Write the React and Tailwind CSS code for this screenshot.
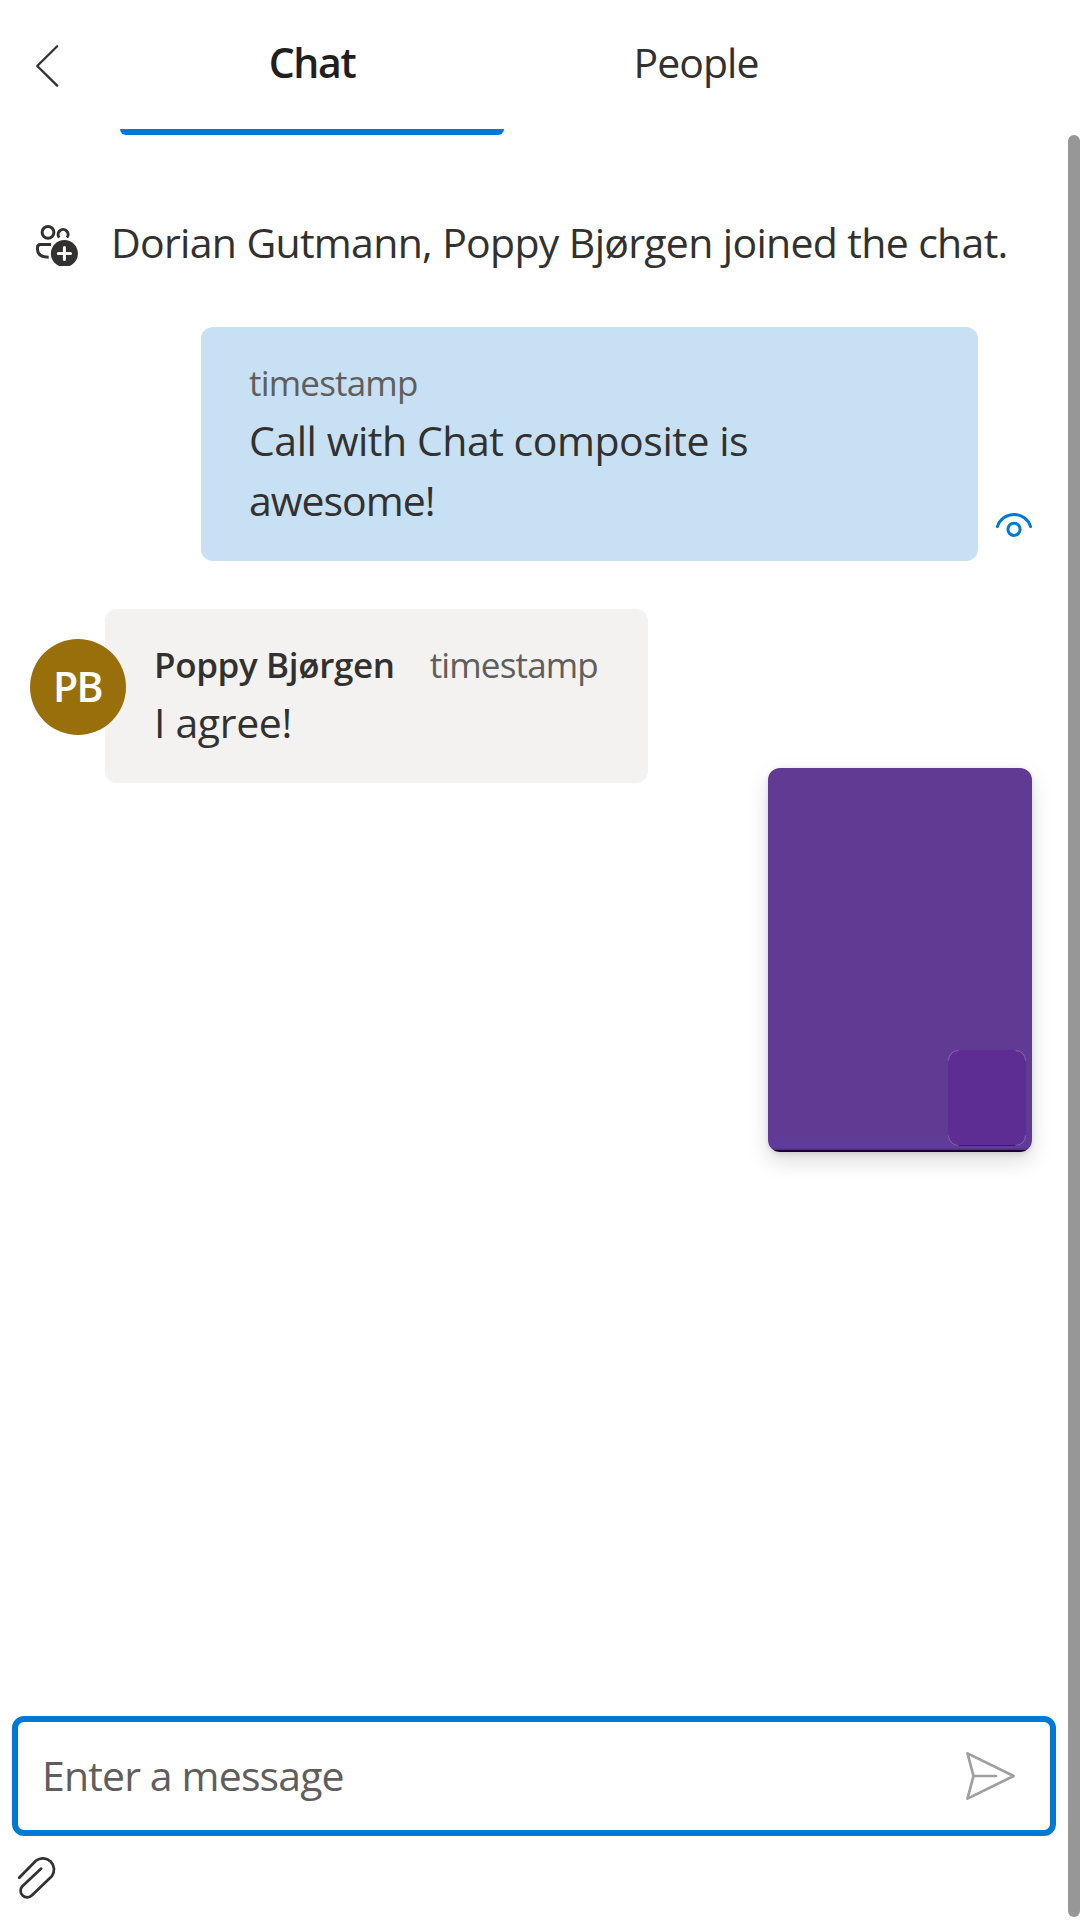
function BackIcon() {
  return (
    <svg className="ml-[33px] mt-[42px] h-[48px] w-[30px] shrink-0" viewBox="0 0 30 48" fill="none" stroke="#323130" strokeWidth="2.3" strokeLinecap="round" strokeLinejoin="round">
      <path d="M24.2 4.2 4.2 24 24.2 43.6" />
    </svg>
  );
}

function PeopleAddIcon() {
  return (
    <svg className="ml-[33px] h-[48px] w-[48px] shrink-0" viewBox="33 218 48 48" fill="none" stroke="#323130" strokeWidth="3">
      <circle cx="48" cy="232.3" r="5.9" />
      <path d="M59.2 237.6a5 5 0 1 1 7.8 0" />
      <path d="M51 244.5H40.5q-3 0-3 3v2q0 7.6 11.2 7.7" />
      <circle cx="64.4" cy="253.5" r="13.5" fill="#323130" stroke="none" />
      <path d="M64.4 247.4v12.2M58.3 253.5h12.2" stroke="#fff" strokeLinecap="round" />
    </svg>
  );
}

function SeenIcon() {
  return (
    <svg className="ml-[15px] mb-[21px] h-[30px] w-[42px] shrink-0" viewBox="993 510 42 30" fill="none" stroke="#0078d4" strokeWidth="3" strokeLinecap="round">
      <path d="M997.4 526.6a17.4 17.4 0 0 1 33.2 0" />
      <circle cx="1014" cy="529.3" r="6.1" />
    </svg>
  );
}

function SendIcon() {
  return (
    <svg className="mr-[33px] h-[54px] w-[54px] shrink-0" viewBox="963 1749 54 54" fill="none" stroke="#a19f9d" strokeWidth="2.7" strokeLinecap="round" strokeLinejoin="round">
      <path d="M967.5 1753.4 1013.6 1776l-46.1 22.6 6-22.6zM973.5 1776H996" />
    </svg>
  );
}

function AttachIcon() {
  return (
    <svg className="ml-[15px] mt-[17px] h-[48px] w-[44px]" viewBox="15 1854 44 48" fill="none" stroke="#323130" strokeWidth="2.7" strokeLinecap="round" strokeLinejoin="round">
      <path d="M19.2 1878.8 35.9 1861.7a11.2 11.2 0 0 1 15.9 15.5L32 1896.3a6.6 6.6 0 0 1-9.6-9.1L41.2 1869.6" />
    </svg>
  );
}

export default function App() {
  return (
    <div className="relative flex h-[1920px] w-[1080px] flex-col overflow-hidden bg-white font-['Open_Sans','Segoe_UI',sans-serif] text-[41px] leading-[60px] text-[#323130]">
      <header className="flex h-[135px] shrink-0">
        <div className="w-[120px] shrink-0">
          <BackIcon />
        </div>
        <div className="flex w-[384px] flex-col items-center justify-between pt-8">
          <span className="font-semibold tracking-[-1.4px] text-[#201f1e]">Chat</span>
          <span className="h-[6px] w-full rounded-b-[6px] bg-[#0078d4]" />
        </div>
        <div className="flex w-[384px] justify-center pt-8">
          <span className="tracking-[-1px]">People</span>
        </div>
      </header>

      <div className="flex min-h-0 flex-1">
        <main className="flex w-[1068px] flex-col">
          <div className="mt-[77px] flex h-[60px] items-center whitespace-nowrap">
            <PeopleAddIcon />
            <span className="ml-[30px] tracking-[-0.7px] [word-spacing:0.2px]">Dorian Gutmann, Poppy Bjørgen joined the chat.</span>
          </div>

          <div className="mt-[55px] flex items-end pl-[201px]">
            <div className="h-[234px] w-[777px] rounded-[12px] bg-[#c7e0f4] pl-[48px] pt-8">
              <p className="mb-[3px] text-[35px] leading-[48px] tracking-[-0.8px] text-[#605e5c]">timestamp</p>
              <p className="w-[540px]">
                <span className="tracking-[-0.46px]">Call with Chat composite is</span>{" "}
                <span className="tracking-[-1px]">awesome!</span>
              </p>
            </div>
            <SeenIcon />
          </div>

          <div className="mt-12 flex pl-[30px]">
            <div className="z-10 -mr-[21px] mt-[30px] flex size-[96px] items-center justify-center rounded-full bg-[#986f0b] pb-[2px] pr-px font-semibold tracking-[-1.5px] text-white">
              PB
            </div>
            <div className="h-[174px] w-[543px] rounded-[12px] bg-[#f3f2f1] pl-[49px] pt-8">
              <p className="mb-[3px] flex gap-[35px] text-[35px] leading-[48px]">
                <span className="font-semibold tracking-[-0.36px]">Poppy Bjørgen</span>
                <span className="tracking-[-0.85px] text-[#605e5c]">timestamp</span>
              </p>
              <p className="tracking-[-0.35px]">I agree!</p>
            </div>
          </div>

          <footer className="mt-auto h-[204px]">
            <div className="ml-3 flex h-[120px] w-[1044px] items-center justify-between rounded-[12px] border-[6px] border-[#0078d4] pl-[24px]">
              <span className="pb-[2px] tracking-[-0.85px] text-[#605e5c]">Enter a message</span>
              <SendIcon />
            </div>
            <AttachIcon />
          </footer>
        </main>
        <div className="mb-[3px] w-[12px] rounded-full bg-[#979797]" />
      </div>

      {/* Floating picture-in-picture video tile */}
      <div className="absolute left-[768px] top-[768px] flex h-[384px] w-[264px] items-end justify-end rounded-[12px] bg-[linear-gradient(to_bottom,#613a94_0,#613a94_362px,#5e3b9c_380px,#4a2c70_382px,#1b0030_382px,#1b0030_384px)] pb-[6px] pr-[6px] shadow-[0_9.6px_21.6px_rgba(0,0,0,0.13),0_1.8px_5.4px_rgba(0,0,0,0.11)]">
        <div className="h-[96px] w-[78px] rounded-[12px] bg-[linear-gradient(to_bottom,#5e2d94_0,#5e2d94_95px,#3d1a68_95px)]">
          <svg className="h-[96px] w-[78px]" viewBox="0 0 78 96" fill="none" stroke="#ffffff" strokeOpacity="0.25">
            <path d="M.5 10.5a10 10 0 0 1 10-10M67.5.5a10 10 0 0 1 10 10M77.500 85.5a10 10 0 0 1-10 10M10.500 95.5a10 10 0 0 1-10-10" />
          </svg>
        </div>
      </div>
    </div>
  );
}
